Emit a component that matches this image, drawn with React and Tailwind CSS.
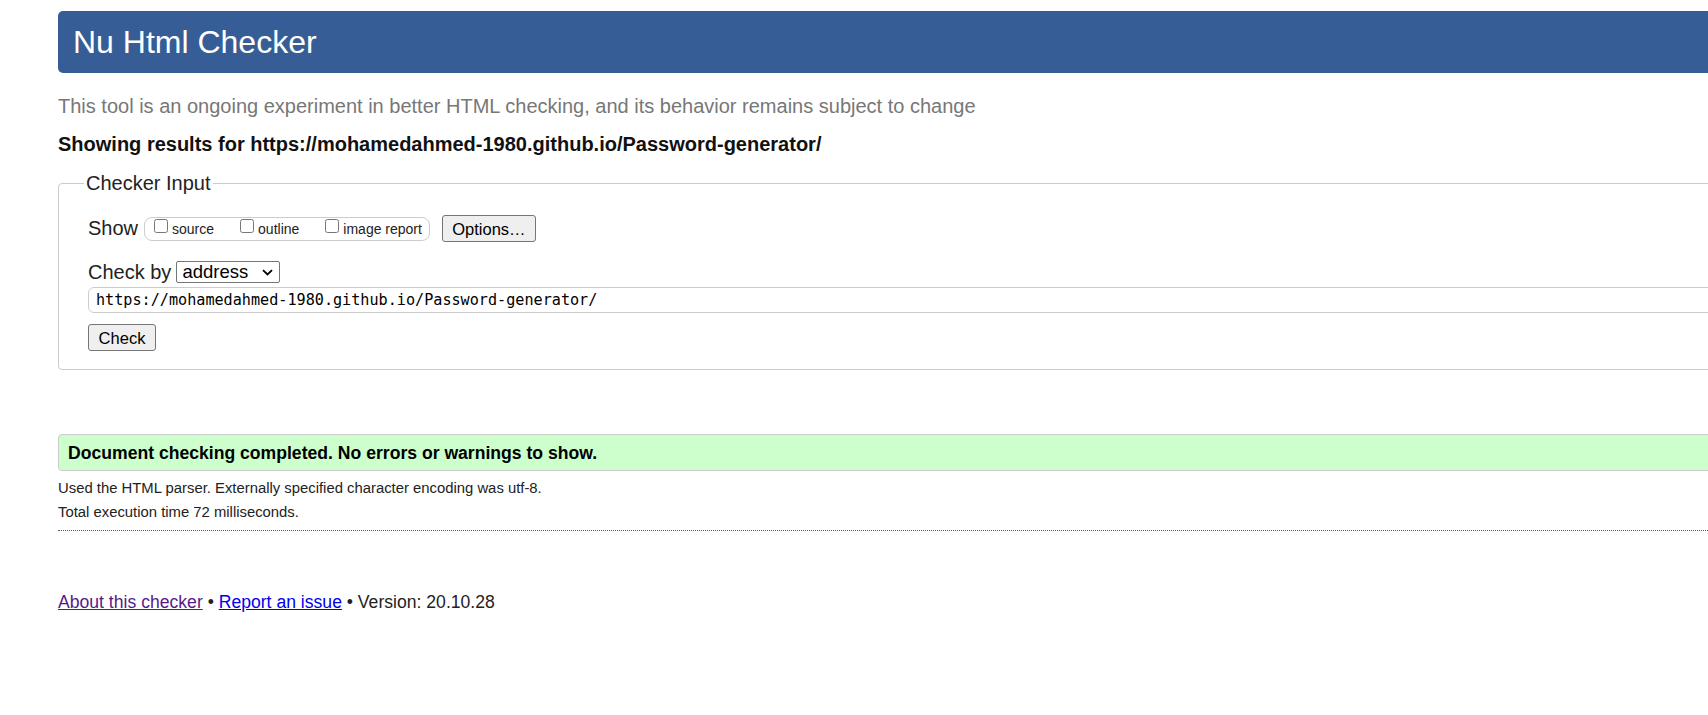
import React from "react";

function Checkbox({ label }) {
  return (
    <label className="flex items-start text-[14px] text-[#222]">
      <input type="checkbox" className="mt-[1px] mr-[4px] w-[14px] h-[14px]" />
      <span className="mt-[3px] leading-[16px]">{label}</span>
    </label>
  );
}

export default function App() {
  return (
    <div
      className="w-[1708px] h-[715px] overflow-hidden bg-white text-[#222] text-[20px]"
      style={{ fontFamily: '"Liberation Sans", Arial, sans-serif' }}
    >
      <div className="ml-[58px] w-[1700px] pt-[11px]">
        <div className="h-[62px] bg-[#365d95] rounded-[5px] flex items-center pl-[15px]">
          <h1 className="text-[32px] text-white leading-[36px]">Nu Html Checker</h1>
        </div>

        <p className="mt-[22px] leading-[23px] text-[#777]">
          This tool is an ongoing experiment in better HTML checking, and its behavior remains subject to change
        </p>

        <p className="mt-[15px] leading-[23px] font-bold text-[#111]">
          Showing results for https://mohamedahmed-1980.github.io/Password-generator/
        </p>

        <fieldset className="mt-[16px] border border-[#ccc] rounded-[4px] pl-[25px] pr-[25px] pt-[20px] pb-[18px]">
          <legend className="px-[2px] leading-[23px] text-[#222]">Checker Input</legend>

          <div className="flex items-center h-[27px] pl-[4px]">
            <span className="leading-[23px]">Show</span>
            <div className="ml-[6px] flex items-start h-[24px] border border-[#ccc] rounded-[8px] pl-[9px] pr-[7px] gap-[26px]">
              <Checkbox label="source" />
              <Checkbox label="outline" />
              <Checkbox label="image report" />
            </div>
            <button className="ml-[12px] h-[27px] w-[94px] border border-[#767676] bg-[#efefef] rounded-[3px] text-black text-[16.5px] leading-[20px]">
              Options…
            </button>
          </div>

          <div className="mt-[19px] flex items-center h-[22px] pl-[4px]">
            <span className="leading-[23px]">Check by</span>
            <div className="ml-[5px] w-[104px] h-[22px] border border-[#767676] rounded-[2px] flex items-center justify-between pl-[5px] pr-[6px] text-black">
              <span className="text-[18.5px] leading-[20px]">address</span>
              <svg width="11" height="7" viewBox="0 0 11 7" fill="none">
                <path d="M1 1.2 L5.5 5.5 L10 1.2" stroke="#000" strokeWidth="1.8" />
              </svg>
            </div>
          </div>

          <div className="mt-[4px] ml-[4px] h-[26px] border border-[#ccc] rounded-[6px] flex items-center pl-[7px]">
            <span
              className="text-[15.15px] text-black"
              style={{ fontFamily: '"DejaVu Sans Mono", "Liberation Mono", monospace' }}
            >
              https://mohamedahmed-1980.github.io/Password-generator/
            </span>
          </div>

          <div className="mt-[11px] pl-[4px] flex">
            <button className="h-[27px] w-[68px] border border-[#767676] bg-[#efefef] rounded-[3px] text-black text-[16.5px] leading-[20px]">
              Check
            </button>
          </div>
        </fieldset>

        <div className="mt-[64px] h-[37px] bg-[#ccffcc] border border-[#ccc] rounded-[4px] flex items-center pl-[9px]">
          <p className="font-bold text-black text-[17.6px] leading-[20px]">
            Document checking completed. No errors or warnings to show.
          </p>
        </div>

        <p className="mt-[7px] text-[14.85px] leading-[20px] text-[#222]">
          Used the HTML parser. Externally specified character encoding was utf-8.
        </p>
        <p className="mt-[4px] text-[14.85px] leading-[20px] text-[#222]">
          Total execution time 72 milliseconds.
        </p>
        <div className="mt-[8px] border-t border-dotted border-[#555]" />

        <p className="mt-[61px] text-[17.6px] leading-[20px] text-[#222]">
          <a href="#" className="underline text-[#551a8b]">About this checker</a>
          {" • "}
          <a href="#" className="underline text-[#0000ee]">Report an issue</a>
          {" • Version: 20.10.28"}
        </p>
      </div>
    </div>
  );
}
